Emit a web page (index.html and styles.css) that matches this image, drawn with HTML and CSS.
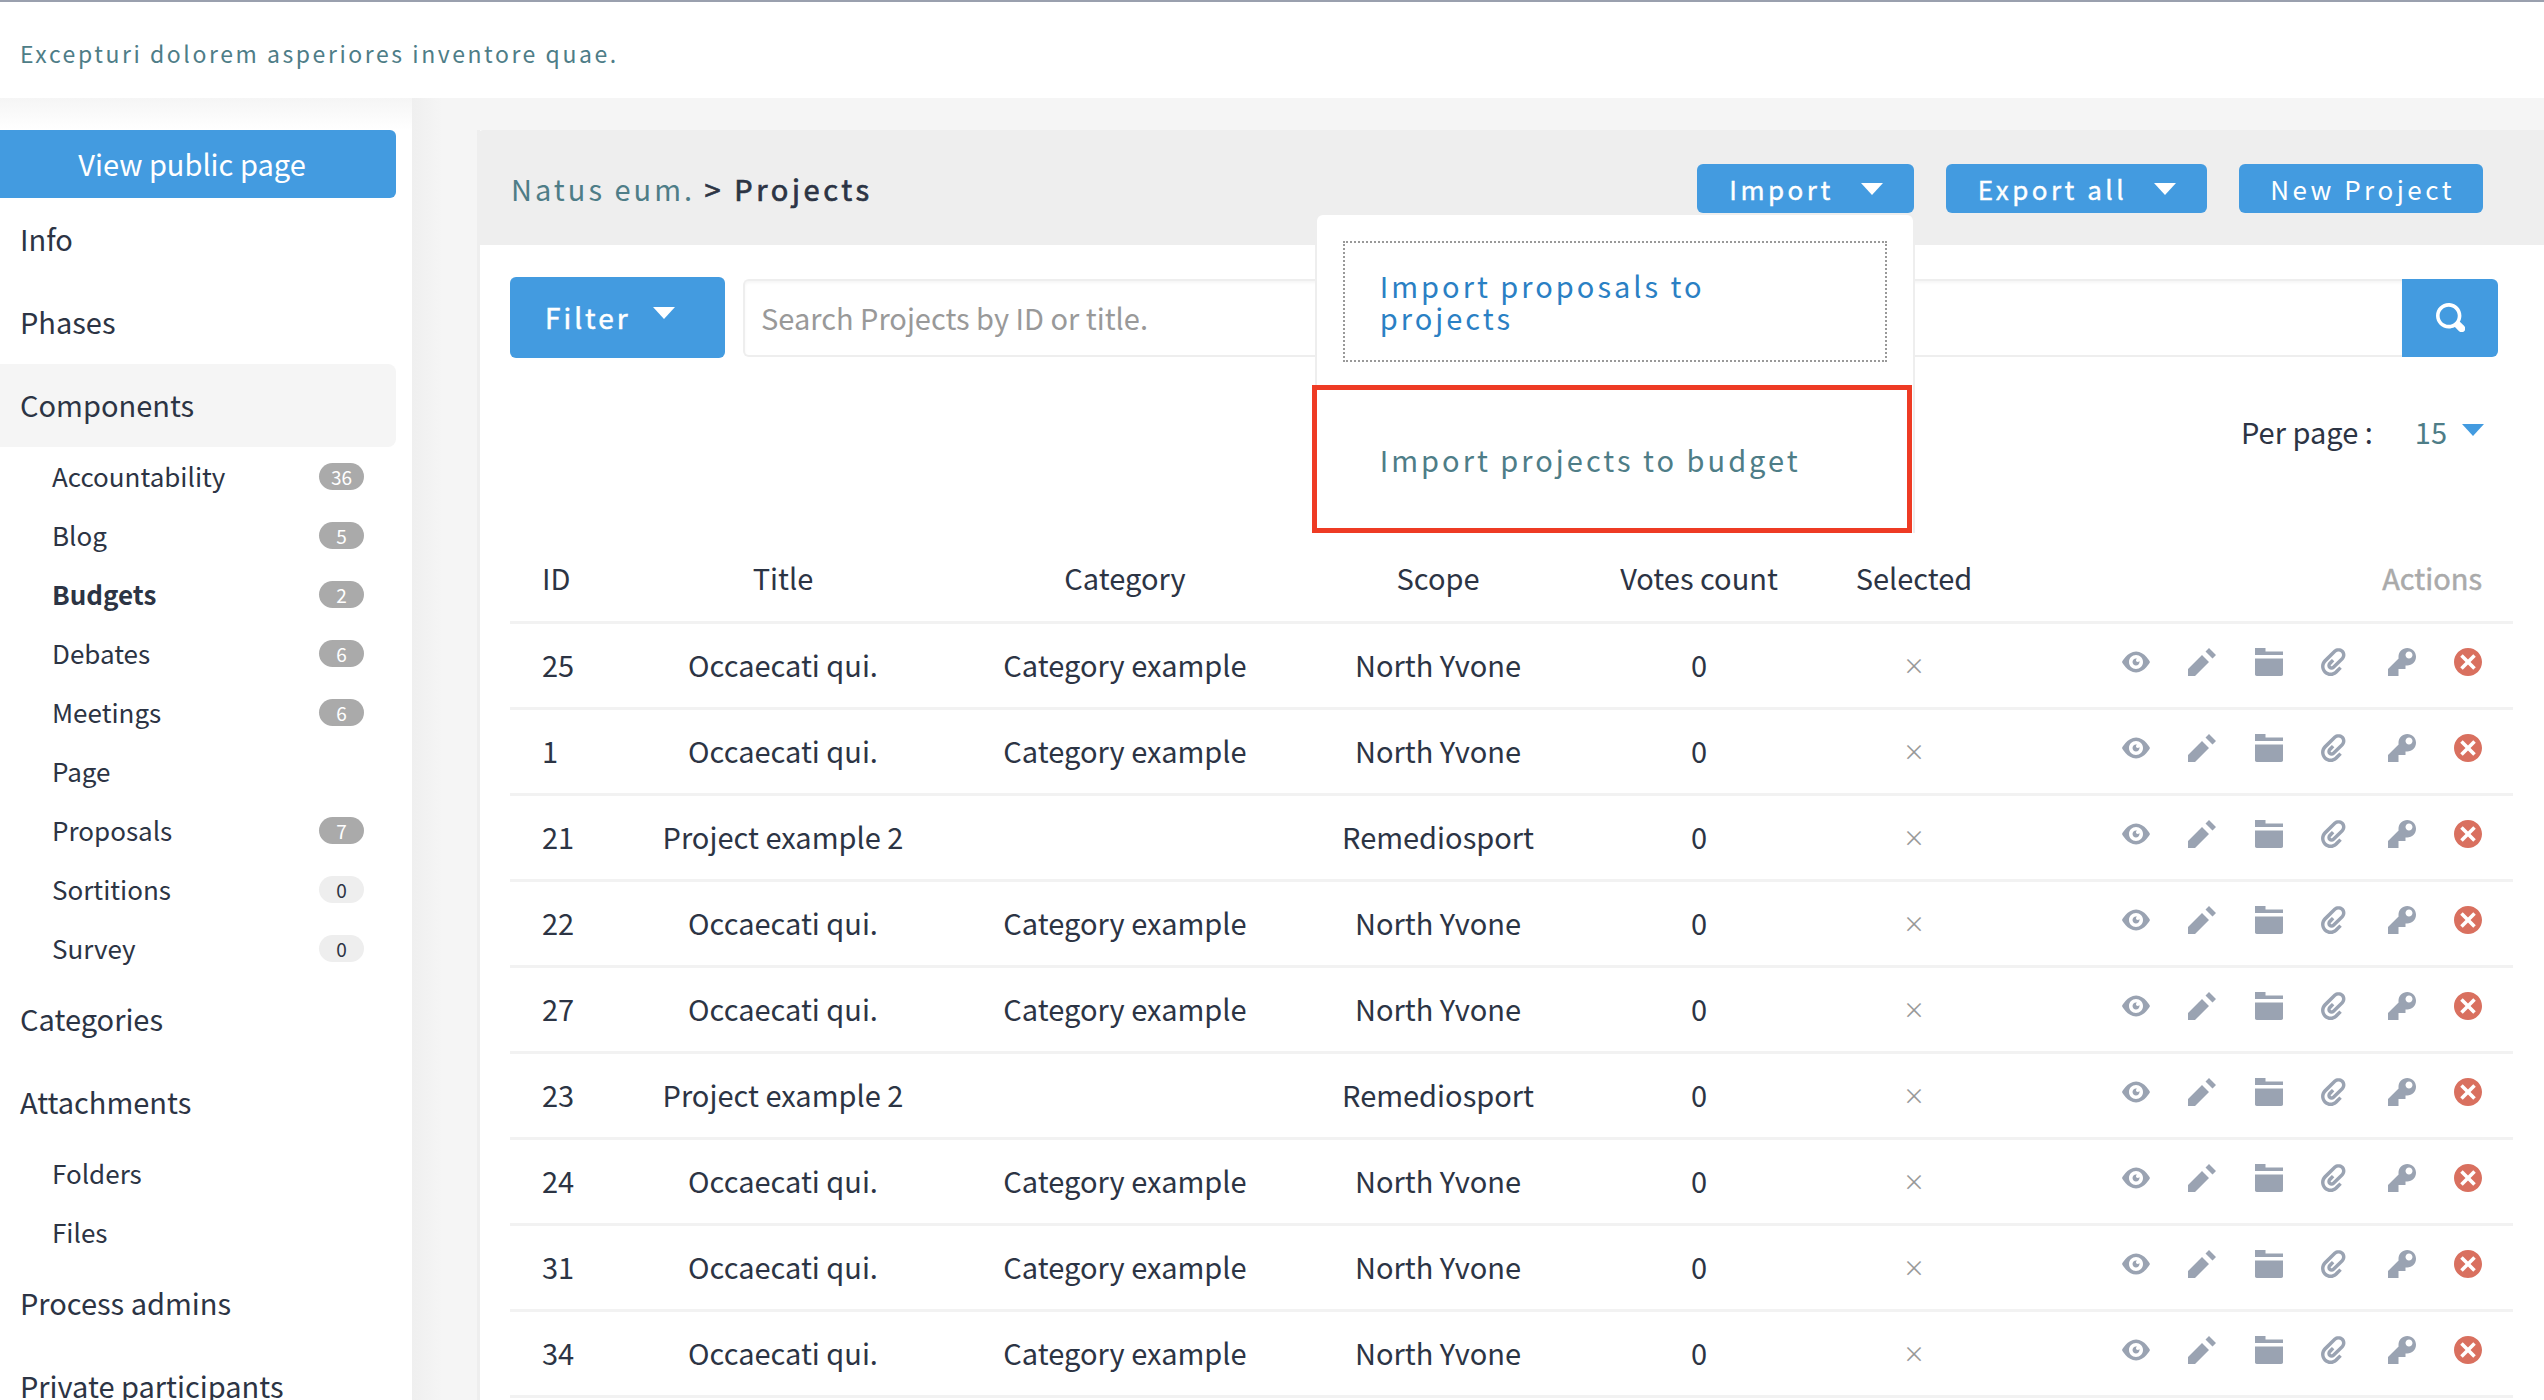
FILE: index.html
```html
<!DOCTYPE html>
<html lang="en">
<head>
    <meta charset="UTF-8">
    <title>Projects</title>
    <link rel="stylesheet" href="styles.css">
</head>
<body>
    <svg class="sprites" xmlns="http://www.w3.org/2000/svg">
        <symbol id="i-eye" viewBox="0 0 8 8"><path transform="translate(0 1)" d="M4.03 0c-2.53 0-4.03 3-4.03 3s1.5 3 4.03 3c2.47 0 3.97-3 3.97-3s-1.5-3-3.97-3zm-.03 1c1.11 0 2 .9 2 2 0 1.11-.89 2-2 2-1.1 0-2-.89-2-2 0-1.1.9-2 2-2zm0 1c-.55 0-1 .45-1 1s.45 1 1 1 1-.45 1-1c0-.1-.04-.19-.06-.28-.08.16-.24.28-.44.28-.28 0-.5-.22-.5-.5 0-.2.12-.36.28-.44-.09-.03-.18-.06-.28-.06z"/></symbol>
        <symbol id="i-pencil" viewBox="0 0 8 8"><path d="M6 0l-1 1 2 2 1-1-2-2zm-2 2l-4 4v2h2l4-4-2-2z"/></symbol>
        <symbol id="i-folder" viewBox="0 0 8 8"><path d="M0 0v2h8v-1h-5v-1h-3zm0 3v4.5c0 .28.22.5.5.5h7c.28 0 .5-.22.5-.5v-4.5h-8z"/></symbol>
        <symbol id="i-clip" viewBox="0 0 8 8"><path d="M5 0c-.51 0-1.02.21-1.41.59l-2.78 2.72c-1.07 1.07-1.07 2.8 0 3.88 1.07 1.07 2.8 1.07 3.88 0l1.25-1.25-.69-.69-1.16 1.13-.09.13c-.69.69-1.81.69-2.5 0-.68-.68-.66-1.78 0-2.47l2.78-2.75c.39-.39 1.04-.39 1.44 0 .39.39.37 1.01 0 1.41l-2.5 2.47c-.1.1-.27.1-.38 0-.1-.1-.1-.27 0-.38l.06-.03.91-.94-.69-.69-.97.97c-.48.48-.48 1.27 0 1.75s1.27.48 1.75 0l2.5-2.44c.78-.78.78-2.04 0-2.81-.39-.39-.89-.59-1.41-.59z"/></symbol>
        <symbol id="i-key" viewBox="0 0 8 8"><path d="M5.5 0c-1.38 0-2.5 1.12-2.5 2.5 0 .16 0 .32.03.47l-3.03 3.03v2h3v-2h2v-1l.03-.03c.15.03.31.03.47.03 1.38 0 2.5-1.12 2.5-2.5s-1.12-2.5-2.5-2.5zm.5 1c.55 0 1 .45 1 1s-.45 1-1 1-1-.45-1-1 .45-1 1-1z"/></symbol>
        <symbol id="i-x" viewBox="0 0 8 8"><path d="M4 0c-2.21 0-4 1.79-4 4s1.79 4 4 4 4-1.79 4-4-1.79-4-4-4zm-1.5 1.78l1.5 1.5 1.5-1.5.72.72-1.5 1.5 1.5 1.5-.72.72-1.5-1.5-1.5 1.5-.72-.72 1.5-1.5-1.5-1.5.72-.72z"/></symbol>
        <symbol id="i-search" viewBox="0 0 8 8"><path d="M3.5 0c-1.93 0-3.5 1.57-3.5 3.5s1.57 3.5 3.5 3.5c.59 0 1.17-.14 1.66-.41a1 1 0 0 0 .13.13l1 1a1.02 1.02 0 1 0 1.44-1.44l-1-1a1 1 0 0 0-.16-.13c.27-.49.44-1.06.44-1.66 0-1.93-1.57-3.5-3.5-3.5zm0 1c1.39 0 2.5 1.11 2.5 2.5 0 .66-.24 1.27-.66 1.72-.01.01-.02.02-.03.03a1 1 0 0 0-.13.13c-.44.4-1.04.63-1.69.63-1.39 0-2.5-1.11-2.5-2.5s1.11-2.5 2.5-2.5z"/></symbol>
    </svg>

    <header class="topbar">
        <p class="tagline">Excepturi dolorem asperiores inventore quae.</p>
    </header>

    <div class="layout">
        <aside class="sidebar">
            <a class="public-btn">View public page</a>
            <ul class="nav">
                <li class="nav-item">Info</li>
                <li class="nav-item">Phases</li>
                <li class="nav-item is-open">Components</li>
                <li class="sub-item">Accountability <span class="badge">36</span></li>
                <li class="sub-item">Blog <span class="badge">5</span></li>
                <li class="sub-item is-current">Budgets <span class="badge">2</span></li>
                <li class="sub-item">Debates <span class="badge">6</span></li>
                <li class="sub-item">Meetings <span class="badge">6</span></li>
                <li class="sub-item">Page</li>
                <li class="sub-item">Proposals <span class="badge">7</span></li>
                <li class="sub-item">Sortitions <span class="badge badge-empty">0</span></li>
                <li class="sub-item">Survey <span class="badge badge-empty">0</span></li>
                <li class="nav-item">Categories</li>
                <li class="nav-item">Attachments</li>
                <li class="sub-item">Folders</li>
                <li class="sub-item">Files</li>
                <li class="nav-item">Process admins</li>
                <li class="nav-item">Private participants</li>
            </ul>
        </aside>

        <main class="content">
            <section class="card">
                <div class="card-header">
                    <h2 class="crumbs"><span class="crumb-link">Natus eum.</span> <span class="crumb-current">&gt; Projects</span></h2>
                    <div class="actions-bar">
                        <div class="dropdown-wrap">
                            <a class="btn">Import <span class="caret"></span></a>
                            <div class="dropdown">
                                <a class="dropdown-item is-focus">Import proposals to projects</a>
                                <a class="dropdown-item">Import projects to budget</a>
                                <div class="highlight"></div>
                            </div>
                        </div>
                        <a class="btn">Export all <span class="caret"></span></a>
                        <a class="btn btn-plain">New Project</a>
                    </div>
                </div>

                <div class="card-body">
                    <div class="filters">
                        <a class="filter-btn">Filter <span class="caret"></span></a>
                        <div class="search-input">Search Projects by ID or title.</div>
                        <a class="search-btn"><svg class="icon-search"><use href="#i-search"/></svg></a>
                    </div>

                    <div class="per-page">
                        <span>Per page :</span>
                        <span class="per-page-value">15</span>
                        <span class="caret caret-blue"></span>
                    </div>

                    <table class="projects">
                        <colgroup>
                            <col class="col-id"><col class="col-title"><col class="col-cat"><col class="col-scope"><col class="col-votes"><col class="col-sel"><col>
                        </colgroup>
                        <thead>
                            <tr><th class="cell-id">ID</th><th>Title</th><th>Category</th><th>Scope</th><th>Votes count</th><th>Selected</th><th class="cell-actions-head">Actions</th></tr>
                        </thead>
                        <tbody>
                            <tr><td class="cell-id">25</td><td>Occaecati qui.</td><td>Category example</td><td>North Yvone</td><td>0</td><td class="cell-sel">&times;</td><td><div class="row-icons"><svg><use href="#i-eye"/></svg><svg><use href="#i-pencil"/></svg><svg><use href="#i-folder"/></svg><svg><use href="#i-clip"/></svg><svg><use href="#i-key"/></svg><svg class="danger"><use href="#i-x"/></svg></div></td></tr>
                            <tr><td class="cell-id">1</td><td>Occaecati qui.</td><td>Category example</td><td>North Yvone</td><td>0</td><td class="cell-sel">&times;</td><td><div class="row-icons"><svg><use href="#i-eye"/></svg><svg><use href="#i-pencil"/></svg><svg><use href="#i-folder"/></svg><svg><use href="#i-clip"/></svg><svg><use href="#i-key"/></svg><svg class="danger"><use href="#i-x"/></svg></div></td></tr>
                            <tr><td class="cell-id">21</td><td>Project example 2</td><td></td><td>Remediosport</td><td>0</td><td class="cell-sel">&times;</td><td><div class="row-icons"><svg><use href="#i-eye"/></svg><svg><use href="#i-pencil"/></svg><svg><use href="#i-folder"/></svg><svg><use href="#i-clip"/></svg><svg><use href="#i-key"/></svg><svg class="danger"><use href="#i-x"/></svg></div></td></tr>
                            <tr><td class="cell-id">22</td><td>Occaecati qui.</td><td>Category example</td><td>North Yvone</td><td>0</td><td class="cell-sel">&times;</td><td><div class="row-icons"><svg><use href="#i-eye"/></svg><svg><use href="#i-pencil"/></svg><svg><use href="#i-folder"/></svg><svg><use href="#i-clip"/></svg><svg><use href="#i-key"/></svg><svg class="danger"><use href="#i-x"/></svg></div></td></tr>
                            <tr><td class="cell-id">27</td><td>Occaecati qui.</td><td>Category example</td><td>North Yvone</td><td>0</td><td class="cell-sel">&times;</td><td><div class="row-icons"><svg><use href="#i-eye"/></svg><svg><use href="#i-pencil"/></svg><svg><use href="#i-folder"/></svg><svg><use href="#i-clip"/></svg><svg><use href="#i-key"/></svg><svg class="danger"><use href="#i-x"/></svg></div></td></tr>
                            <tr><td class="cell-id">23</td><td>Project example 2</td><td></td><td>Remediosport</td><td>0</td><td class="cell-sel">&times;</td><td><div class="row-icons"><svg><use href="#i-eye"/></svg><svg><use href="#i-pencil"/></svg><svg><use href="#i-folder"/></svg><svg><use href="#i-clip"/></svg><svg><use href="#i-key"/></svg><svg class="danger"><use href="#i-x"/></svg></div></td></tr>
                            <tr><td class="cell-id">24</td><td>Occaecati qui.</td><td>Category example</td><td>North Yvone</td><td>0</td><td class="cell-sel">&times;</td><td><div class="row-icons"><svg><use href="#i-eye"/></svg><svg><use href="#i-pencil"/></svg><svg><use href="#i-folder"/></svg><svg><use href="#i-clip"/></svg><svg><use href="#i-key"/></svg><svg class="danger"><use href="#i-x"/></svg></div></td></tr>
                            <tr><td class="cell-id">31</td><td>Occaecati qui.</td><td>Category example</td><td>North Yvone</td><td>0</td><td class="cell-sel">&times;</td><td><div class="row-icons"><svg><use href="#i-eye"/></svg><svg><use href="#i-pencil"/></svg><svg><use href="#i-folder"/></svg><svg><use href="#i-clip"/></svg><svg><use href="#i-key"/></svg><svg class="danger"><use href="#i-x"/></svg></div></td></tr>
                            <tr><td class="cell-id">34</td><td>Occaecati qui.</td><td>Category example</td><td>North Yvone</td><td>0</td><td class="cell-sel">&times;</td><td><div class="row-icons"><svg><use href="#i-eye"/></svg><svg><use href="#i-pencil"/></svg><svg><use href="#i-folder"/></svg><svg><use href="#i-clip"/></svg><svg><use href="#i-key"/></svg><svg class="danger"><use href="#i-x"/></svg></div></td></tr>
                        </tbody>
                    </table>
                </div>
            </section>
        </main>
    </div>
</body>
</html>
```

FILE: styles.css
```css
* {
    box-sizing: border-box;
    padding: 0;
    margin: 0;
}

html, body {
    height: 100%;
    overflow: hidden;
}

body {
    font-family: "Noto Sans CJK SC", "Noto Sans", sans-serif;
    font-size: 29px;
    line-height: 38px;
    color: #2c3444;
    background: #fff;
}

.sprites {
    display: none;
}

/* top bar */
.topbar {
    height: 98px;
    border-top: 2px solid #9aa0ae;
    padding: 34px 20px 0;
    background: #fff;
}

.tagline {
    font-size: 23px;
    line-height: 34px;
    letter-spacing: 2.55px;
    color: #4e7d87;
}

.layout {
    display: flex;
    height: 1302px;
}

/* sidebar */
.sidebar {
    width: 412px;
    flex-shrink: 0;
    padding: 32px 16px 0 0;
    background: linear-gradient(#f5f5f5 0, #fff 32px);
}

.public-btn {
    display: block;
    height: 68px;
    line-height: 66px;
    text-align: center;
    padding-right: 12px;
    color: #fff;
    background: #439be0;
    border-radius: 0 6px 6px 0;
}

.nav {
    list-style: none;
}

.nav-item {
    height: 83px;
    line-height: 81px;
    padding-left: 20px;
    white-space: nowrap;
}

.nav-item.is-open {
    background: #f5f5f5;
    border-radius: 0 8px 8px 0;
}

.sub-item {
    height: 59px;
    padding: 0 32px 2px 52px;
    display: flex;
    align-items: center;
    justify-content: space-between;
    font-size: 26px;
}

.sub-item.is-current {
    font-weight: 700;
}

.badge {
    width: 45px;
    height: 27px;
    line-height: 27px;
    margin-top: 2px;
    border-radius: 14px;
    text-align: center;
    font-size: 19px;
    font-weight: 400;
    color: #fff;
    background: #aaa;
}

.badge-empty {
    color: #2c3444;
    background: #eee;
}

/* main */
.content {
    flex: 1;
    min-width: 0;
    padding: 32px 0 0 65px;
    background: linear-gradient(90deg, #efefef 0, #f5f5f5 30px);
}

.card {
    background: #fff;
    border-left: 3px solid #eee;
    height: 100%;
}

.card-header {
    height: 115px;
    margin-left: -3px;
    padding: 33px 61px 0 34px;
    display: flex;
    justify-content: space-between;
    background: #eee;
    border-radius: 6px 0 0 0;
}

.crumbs {
    font-size: 29px;
    line-height: 50px;
    font-weight: 400;
    letter-spacing: 3px;
}

.crumb-link {
    color: #4e7d87;
}

.crumb-current {
    letter-spacing: 3.6px;
    -webkit-text-stroke: .7px currentColor;
}

.actions-bar {
    display: flex;
    gap: 32px;
    padding-top: 1px;
}

.dropdown-wrap {
    position: relative;
}

.btn {
    display: flex;
    align-items: center;
    gap: 27px;
    height: 49px;
    padding: 0 31px 0 32px;
    font-size: 26px;
    letter-spacing: 3.5px;
    color: #fff;
    background: #439be0;
    border-radius: 6px;
    -webkit-text-stroke: .4px #fff;
}

.btn-plain {
    padding: 0 28px 0 31px;
    -webkit-text-stroke: 0;
}

.caret {
    display: inline-block;
    width: 0;
    height: 0;
    border-left: 11px solid transparent;
    border-right: 11px solid transparent;
    border-top: 12px solid #fff;
}

.caret-blue {
    border-top-color: #439be0;
    margin: 0 0 3px 15px;
}

.dropdown {
    position: absolute;
    top: 51px;
    right: 1px;
    width: 596px;
    height: 318px;
    padding: 26px;
    background: #fff;
    border-radius: 6px 6px 0 0;
    box-shadow: -2px 0 0 #eee, 2px 0 0 #eee;
    z-index: 5;
}

.dropdown-item {
    display: block;
    font-size: 29px;
    line-height: 32px;
    letter-spacing: 3px;
    padding: 26px 60px 26px 37px;
    margin-top: 55px;
    color: #4e7d87;
}

.dropdown-item.is-focus {
    height: 121px;
    margin-top: 0;
    padding-left: 35px;
    border: 2px dotted #999;
    color: #2a80c4;
}

.highlight {
    position: absolute;
    left: -5px;
    top: 170px;
    width: 600px;
    height: 148px;
    border: 5px solid #ee3b24;
}

.card-body {
    padding: 32px 31px 0 30px;
}

.filters {
    display: flex;
    align-items: center;
    padding-right: 15px;
}

.filter-btn {
    display: flex;
    align-items: center;
    gap: 22px;
    height: 81px;
    width: 215px;
    padding: 0 0 2px 35px;
    font-size: 28px;
    letter-spacing: 3px;
    color: #fff;
    background: #439be0;
    border-radius: 6px;
    margin-right: 18px;
    -webkit-text-stroke: .5px #fff;
}

.filter-btn .caret {
    margin-bottom: 8px;
}

.search-input {
    flex: 1;
    height: 78px;
    line-height: 72px;
    padding-left: 16px;
    border: 2px solid #eee;
    border-right: 0;
    border-radius: 6px 0 0 6px;
    color: #999;
    box-shadow: inset 0 2px 3px rgba(0, 0, 0, .04);
}

.search-btn {
    width: 96px;
    height: 78px;
    display: flex;
    align-items: center;
    justify-content: center;
    background: #439be0;
    border-radius: 0 6px 6px 0;
}

.icon-search {
    width: 29px;
    height: 29px;
    fill: #fff;
}

.per-page {
    display: flex;
    align-items: center;
    justify-content: flex-end;
    height: 38px;
    margin-top: 54px;
    padding: 0 29px 0 0;
}

.per-page-value {
    margin-left: 42px;
    color: #4e7d87;
}

/* table */
.projects {
    width: 2003px;
    margin-top: 86px;
    border-collapse: collapse;
    table-layout: fixed;
}

.col-id { width: 130px; }
.col-title { width: 286px; }
.col-cat { width: 398px; }
.col-scope { width: 228px; }
.col-votes { width: 294px; }
.col-sel { width: 136px; }

.projects th, .projects td {
    height: 86px;
    padding-bottom: 2px;
    font-weight: 400;
    text-align: center;
    white-space: nowrap;
    border-bottom: 3px solid #f2f2f2;
}

.projects .cell-id {
    text-align: left;
    padding-left: 32px;
}

.projects .cell-actions-head {
    text-align: right;
    padding-right: 31px;
    color: #aaa;
    -webkit-text-stroke: .5px #aaa;
}

.projects .cell-sel {
    color: #999;
    font-size: 22px;
}

.row-icons {
    display: flex;
    justify-content: flex-end;
    gap: 38.5px;
    padding: 0 31px 4px 0;
}

.row-icons svg {
    width: 28px;
    height: 28px;
    fill: #9aa3b2;
}

.row-icons .danger {
    fill: #d9705f;
}
```
